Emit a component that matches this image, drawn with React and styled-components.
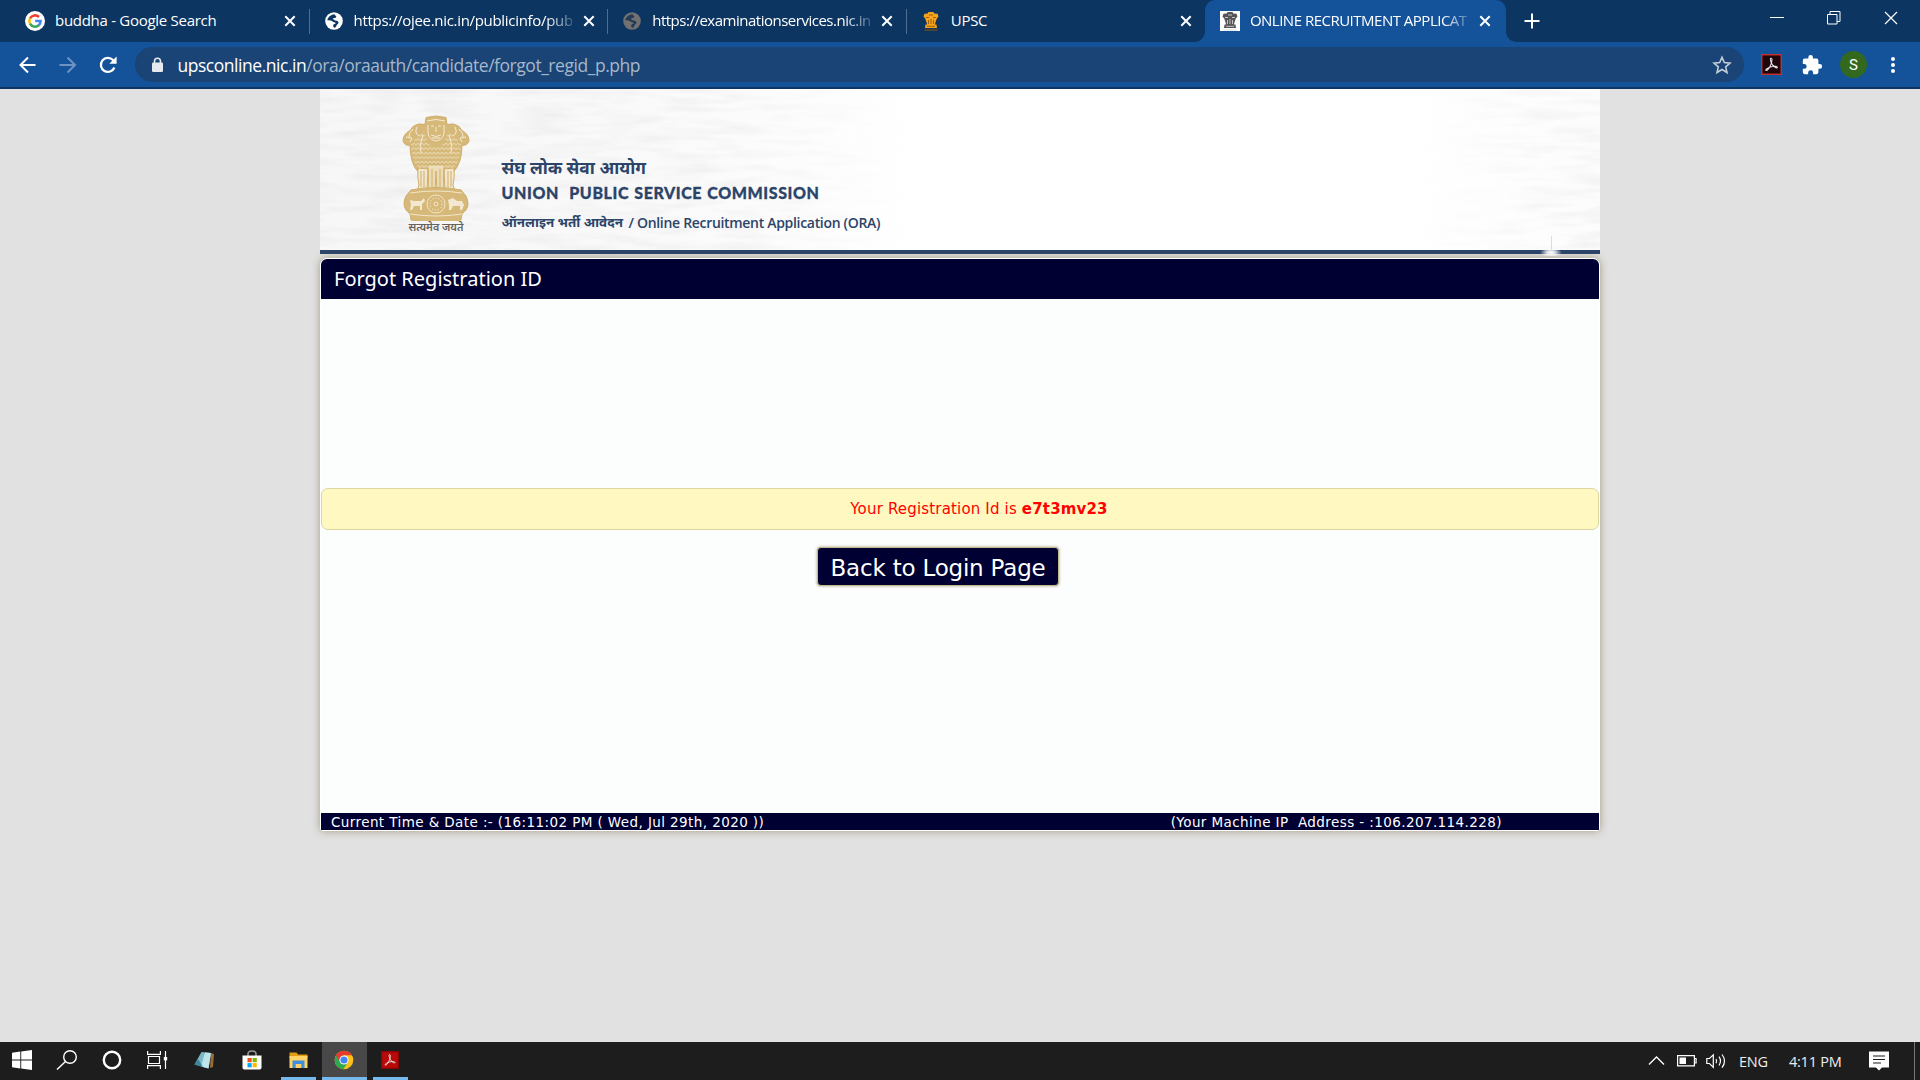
import React from "react";
import styled, { createGlobalStyle, css } from "styled-components";

const UI = `"Open Sans", "Noto Sans", sans-serif`;
const VERDANA = `Verdana, "DejaVu Sans", sans-serif`;
const NAVY = "#000033";

const Global = createGlobalStyle`
  * { box-sizing: border-box; }
  html, body { margin: 0; padding: 0; background: #e1e1e1; }
  body { font-family: ${UI}; overflow: hidden; }
  svg { display: block; flex: none; }
`;

const Screen = styled.div`
  display: flex;
  flex-direction: column;
  width: 1920px;
  height: 1080px;
  background: #e1e1e1;
`;

/* ---------- browser chrome ---------- */

const TabStrip = styled.div`
  display: flex;
  height: 42px;
  padding-left: 11px;
  background: #0c3561;
  color: #fff;
`;

const Tab = styled.div`
  position: relative;
  display: flex;
  align-items: center;
  width: 298.6px;
  height: 42px;
  padding: 0 13px 0 14px;
  ${(p) =>
    p.$divider &&
    css`
      &::after {
        content: "";
        position: absolute;
        right: 0;
        top: 9px;
        width: 1px;
        height: 25px;
        background: #4f6f91;
      }
    `}
  ${(p) =>
    p.$active &&
    css`
      width: 300.5px;
      padding-left: 14.5px;
      background: #145299;
      border-radius: 10px 10px 0 0;
      &::before,
      &::after {
        content: "";
        position: absolute;
        bottom: 0;
        width: 10px;
        height: 10px;
      }
      &::before {
        left: -10px;
        background: radial-gradient(circle at 0 0, transparent 9.5px, #145299 10px);
      }
      &::after {
        right: -10px;
        background: radial-gradient(circle at 100% 0, transparent 9.5px, #145299 10px);
      }
    `}
`;

const TabIcon = styled.div`
  display: flex;
  align-items: center;
  justify-content: center;
  width: 20px;
  height: 20px;
  margin-right: 10px;
  flex: none;
  background: ${(p) => p.$bg || "transparent"};
`;

const TabTitle = styled.div`
  width: 218px;
  margin-right: 11px;
  padding-bottom: 2px;
  overflow: hidden;
  white-space: nowrap;
  font-size: 15px;
  line-height: 22px;
  letter-spacing: ${(p) => p.$ls || "-0.28px"};
  ${(p) =>
    p.$fade &&
    css`
      mask-image: linear-gradient(90deg, #000 192px, transparent 226px);
    `}
`;

const NewTab = styled.div`
  display: flex;
  align-items: center;
  margin-left: 18.5px;
`;

const WindowControls = styled.div`
  display: flex;
  align-items: center;
  gap: 43px;
  margin-left: auto;
  padding: 0 22px 6px 0;
`;

const Toolbar = styled.div`
  display: flex;
  align-items: center;
  height: 47px;
  padding: 0 16px 0 18px;
  background: #145299;
  border-bottom: 2px solid #0c3561;
`;

const NavIcons = styled.div`
  display: flex;
  align-items: center;
  gap: 20px;
  width: 117px;
`;

const AddressBar = styled.div`
  display: flex;
  align-items: center;
  width: 1610px;
  height: 35px;
  padding: 0 12px 0 16px;
  border-radius: 18px;
  background: #194475;
`;

const Url = styled.div`
  flex: 1;
  margin-left: 13.5px;
  color: #a7b7ca;
  font-size: 17.5px;
  line-height: 24px;
  letter-spacing: -0.46px;
  white-space: nowrap;
`;

const Host = styled.span`
  color: #fff;
`;

const Extensions = styled.div`
  display: flex;
  align-items: center;
  gap: 19px;
  margin-left: 17px;
`;

const Avatar = styled.div`
  display: flex;
  align-items: center;
  justify-content: center;
  width: 27px;
  height: 27px;
  margin: 0 -2px;
  border-radius: 50%;
  background: #33691e;
  color: #fff;
  font: 15px Roboto, sans-serif;
`;

/* ---------- page ---------- */

const Page = styled.main`
  display: flex;
  flex-direction: column;
  align-items: center;
  flex: 1;
  min-height: 0;
`;

const Banner = styled.header`
  position: relative;
  display: flex;
  width: 1280px;
  height: 165px;
  background: linear-gradient(90deg, #f7f7f7 0, #f9f9f9 300px, #fff 600px, #fff 1080px, #fcfcfc 1280px);
  border-bottom: 4px solid #2b4468;
  color: #2b4468;
`;

const Texture = styled.svg`
  position: absolute;
  inset: 0;
`;

const Flare = styled.svg`
  position: absolute;
  left: 1218px;
  top: 145px;
`;

const EmblemBlock = styled.div`
  position: relative;
  display: flex;
  flex-direction: column;
  align-items: center;
  width: 72px;
  margin: 26px 0 0 80px;
`;

const Motto = styled.div`
  color: #66615b;
  font: 600 10.8px/12px "Noto Sans", "Noto Sans Devanagari", sans-serif;
  white-space: nowrap;
`;

const BannerText = styled.div`
  position: relative;
  display: flex;
  flex-direction: column;
  margin: 69px 0 0 29.5px;
  white-space: nowrap;
`;

const HindiName = styled.div`
  margin-top: -1px;
  font: 700 17.3px/26px "Noto Sans Devanagari", "Noto Sans", sans-serif;
`;

const EnglishName = styled.div`
  margin-top: -2px;
  font: 900 16px/24px Lato, sans-serif;
  letter-spacing: 0.58px;
  word-spacing: 0.8px;
  -webkit-text-stroke: 0.3px #2b4468;
`;

const PortalName = styled.div`
  display: flex;
  margin-top: 6px;
  font: 600 14px/24px "Open Sans", sans-serif;
  letter-spacing: -0.31px;
`;

const PortalHindi = styled.span`
  width: 127px;
  font: 700 13.4px/26px "Noto Sans Devanagari", "Noto Sans", sans-serif;
  letter-spacing: 0;
`;

const Panel = styled.section`
  display: flex;
  flex-direction: column;
  width: 1280px;
  height: 573px;
  margin-top: 4px;
  border: 1px solid #fff;
  border-radius: 7px 7px 3px 3px;
  background: #fcfdfd;
  box-shadow: 0 0 9px #a39c80;
`;

const PanelTitle = styled.h1`
  height: 40px;
  margin: 0;
  padding-left: 13px;
  border-radius: 6px 6px 0 0;
  background: ${NAVY};
  color: #fff;
  font: 400 20px/40px Tahoma, "Noto Sans", sans-serif;
`;

const Message = styled.div`
  height: 42px;
  margin-top: 189px;
  padding-left: 38px;
  border: 1px solid #dad7a2;
  border-radius: 7px;
  background: #fff9c1;
  color: #f00;
  font: 15px/40px ${VERDANA};
  letter-spacing: 0.17px;
  text-align: center;
`;

const BackButton = styled.button`
  align-self: flex-start;
  width: 242px;
  height: 39px;
  margin: 17px 0 0 496px;
  padding: 3px 0 0;
  border: 1px solid #c5b98a;
  border-radius: 4px;
  background: ${NAVY};
  box-shadow: 0 0 3px #a39c80;
  color: #fff;
  font: 23px/34px ${VERDANA};
  letter-spacing: -0.2px;
  white-space: nowrap;
`;

const StatusBar = styled.footer`
  display: flex;
  justify-content: space-between;
  height: 17px;
  margin-top: auto;
  padding: 0 97px 0 10px;
  background: ${NAVY};
  color: #fff;
  font: 13.5px/18px ${VERDANA};
  letter-spacing: ${(p) => p.$ls || "0.41px"};
  white-space: pre;
`;

/* ---------- taskbar ---------- */

const Taskbar = styled.div`
  display: flex;
  align-items: stretch;
  height: 38px;
  background: #1d1d1d;
  color: #fff;
`;

const TaskItem = styled.div`
  display: flex;
  align-items: center;
  justify-content: center;
  width: ${(p) => p.$w || 46}px;
  background: ${(p) => (p.$active ? "#484848" : "transparent")};
  border-bottom: 3px solid ${(p) => (p.$open ? "#76b9ed" : "transparent")};
  margin: 0 ${(p) => p.$mr || 0}px 0 ${(p) => p.$ml || 0}px;
  padding-right: ${(p) => (p.$open ? 1 : 0)}px;
`;

const Tray = styled.div`
  display: flex;
  align-items: center;
  margin-left: auto;
  width: 266px;
`;

const TrayText = styled.div`
  width: ${(p) => p.$w}px;
  font-size: 14.5px;
  letter-spacing: -0.25px;
  white-space: nowrap;
  color: #eee;
`;

const Spacer = styled.div`
  width: ${(p) => p.$w}px;
`;

const DesktopEdge = styled.div`
  width: 6px;
  height: 38px;
  border-left: 1px solid #777;
`;

/* ---------- drawings ---------- */

const Close = () => (
  <svg width="12" height="12" viewBox="0 0 12 12" stroke="#fff" strokeWidth="2">
    <path d="M1.300 1.300l9.400 9.400M10.700 1.300L1.300 10.700" />
  </svg>
);

const GoogleIcon = () => (
  <svg width="20" height="20" viewBox="0 0 20 20" fill="none" strokeWidth="2.500">
    <circle cx="10" cy="10" r="10" fill="#fff" />
    <path d="M5 7.400A5.700 5.700 0 0 1 14 6" stroke="#ea4335" />
    <path d="M5 12.700a5.700 5.700 0 0 1 0-5.300" stroke="#fbbc05" />
    <path d="M5 12.700a5.700 5.700 0 0 0 8.800 1.600" stroke="#34a853" />
    <path d="M10.200 10h5.400a5.600 5.600 0 0 1-1.800 4.300" stroke="#4285f4" />
  </svg>
);

const Globe = ({ color, land }) => (
  <svg width="18" height="18" viewBox="0 0 18 18">
    <circle cx="9" cy="9" r="8.800" fill={color} />
    <path
      d="M9.800 2.200C6 2.500 3 4.800 2.300 8.200c2.200.2 4.200 0 5.200 1.200c.9 1.100 2.700.3 3 1.500c.3 1.100-2.200.9-2.300 2.300c0 1.100.2 1.900 1 2.600c1.600-.3 2-1.300 2.300-2.300c.4-1.300 2-1.300 2-2.900c0-1.500-1.200-1.900-2.400-1.900c-1.600 0-1.700-1.500-3.400-1.800c.4-1.400 2.200-.4 3.100-1.300c.8-.8.6-1.700-.4-2.100c-.6-.3-.7-.7-.6-1.300z"
      fill={land}
    />
  </svg>
);

const MiniEmblem = ({ main, dark }) => (
  <svg width="18" height="20" viewBox="0 0 18 20">
    <path d="M6.500 1h5l.7 1.500 3.300.3 1 2.700-1.700 2-1.200 3.500-1 3.500H5.400l-1-3.500-1.200-3.500-1.700-2 1-2.700 3.300-.3z" fill={main} />
    <path d="M3.500 13.500h11l.5 3.500H3z" fill={main} />
    <path d="M7 4h4M4 6.500h3M11 6.500h3M6.500 9v4M9 8v5M11.500 9v4M5 15.300h8" stroke={dark} strokeWidth=".8" />
    <path d="M2.500 19h13" stroke={dark} strokeWidth="1.100" />
  </svg>
);

const AcrobatGlyph = ({ size, bg, border }) => (
  <svg width={size} height={size} viewBox="0 0 20 20" fill="none">
    <rect x=".7" y=".7" width="18.600" height="18.600" fill={bg} stroke={border} strokeWidth="1.400" />
    <path
      d="M9.300 4c1.500-.3 1.400 2.200.5 5c-1 3-3.300 6.600-4.800 6.700c-1.700-.3 1-2.700 4.800-3.600c3.400-.8 6-.3 5.800.8c-.5 1.300-3.500-.7-5-3c-1.200-2-2.300-5.500-1.300-5.900z"
      stroke="#e8e8e8"
      strokeWidth="1"
    />
  </svg>
);

const EMBLEM = "#d6b878";

const Emblem = () => (
  <svg width="68" height="106" viewBox="0 0 68 106">
    <defs>
      <pattern id="mane" width="4" height="4.500" patternUnits="userSpaceOnUse">
        <path d="M0 1l2 2.200L4 1" fill="none" stroke="#f1e5c8" strokeWidth=".9" />
      </pattern>
    </defs>
    <g stroke="#cfae6a" strokeWidth="1">
      <path
        d="M24 2.500q10-3 20 0l1 7q7-2 12 2l3 4q7 4 7 10q-1 5-7 5q0 8-2 15q-3 8-7 12H17q-5-4-7-12q-2-7-2-15q-6 0-7-5q0-6 7-10l3-4q5-4 12-2z"
        fill={EMBLEM}
      />
      <path d="M16 53q-1 9 1 17l-2 6h10l1-22zM52 53q1 9-1 17l2 6H43l-1-22z" fill="#f2e7cd" />
      <path d="M26 50q1 12 0 26h7l1-20 1 20h7q-1-14 0-26z" fill="#ecdcb6" />
      <path d="M19 56v16M22 56v17M49 56v16M46 56v17M30 54v18M38 54v18" fill="none" />
    </g>
    <path d="M9 30q4-9 13-14l4 12q8 7 16 0l4-12q9 5 13 14q0 17-9 25H18Q9 47 9 30z" fill="url(#mane)" />
    <g fill="none" stroke="#f5ebd3" strokeWidth="1">
      <path d="M25 6q9-3 18 0M26 10v8q1 7 8 8q7-1 8-8v-8M29 11h3M36 11h3M34 12v5M29 20q5 3 10 0M30 23h8" />
      <path d="M11 14q-5 4-4 9M4 22l6 1-2 4M15 12q-3 6 2 9M57 14q5 4 4 9M64 22l-6 1 2 4M53 12q3 6-2 9" />
      <path d="M21 20q-4 9-2 18M47 20q4 9 2 18" />
    </g>
    <path d="M9 75q25-5 50 0l5 6q4 8 0 14l-4 4-1 6q-25 4-50 0l-1-6-4-4Q0 89 4 81z" fill={EMBLEM} stroke="#cfae6a" />
    <g fill="none" stroke="#f5ebd3" strokeWidth=".9">
      <path d="M8 78q26-4 52 0M8 99q26 4 52 0" />
      <circle cx="34" cy="89" r="9" />
      <circle cx="34" cy="89" r="6" strokeDasharray="1.500 1.500" />
      <circle cx="34" cy="89" r="2" />
    </g>
    <path d="M8 85l4 1h7l3-3 1 3-3 3v6h-2v-4h-6l-2 4H8l1-5zM46 85l5-2 4 3h5l2 4-2 5h-2v-4h-7l-2 4h-2v-5z" fill="#f3e8cf" />
  </svg>
);

const PaperTexture = () => (
  <Texture width="1280" height="161">
    <defs>
      <filter id="paper" x="0" y="0" width="100%" height="100%">
        <feTurbulence type="fractalNoise" baseFrequency="0.02 0.13" numOctaves="2" seed="6" />
        <feColorMatrix values="0 0 0 0 .8  0 0 0 0 .8  0 0 0 0 .81  1.300 0 0 0 -.52" />
      </filter>
      <linearGradient id="fade">
        <stop offset="0" stopColor="#fff" />
        <stop offset=".3" stopColor="#fff" stopOpacity=".8" />
        <stop offset=".46" stopColor="#fff" stopOpacity="0" />
        <stop offset=".86" stopColor="#fff" stopOpacity="0" />
        <stop offset="1" stopColor="#fff" stopOpacity=".8" />
      </linearGradient>
      <mask id="sides">
        <rect width="1280" height="161" fill="url(#fade)" />
      </mask>
    </defs>
    <g mask="url(#sides)">
      <rect width="1280" height="161" filter="url(#paper)" />
    </g>
  </Texture>
);

const LensFlare = () => (
  <Flare width="26" height="22" viewBox="0 0 26 22">
    <defs>
      <radialGradient id="glow">
        <stop offset="0" stopColor="#fff" />
        <stop offset=".4" stopColor="#fff" stopOpacity=".8" />
        <stop offset="1" stopColor="#fff" stopOpacity="0" />
      </radialGradient>
    </defs>
    <ellipse cx="13" cy="18.500" rx="11" ry="5" fill="url(#glow)" />
    <path d="M13.500 2v14" stroke="#dcdcdc" />
  </Flare>
);

const tabs = [
  { title: "buddha - Google Search", icon: <GoogleIcon />, divider: true },
  { title: "https://ojee.nic.in/publicinfo/pub", icon: <Globe color="#fff" land="#0c3561" />, divider: true, fade: true, ls: "-0.31px" },
  { title: "https://examinationservices.nic.in", icon: <Globe color="#717171" land="#243b55" />, divider: true, fade: true, ls: "-0.49px" },
  { title: "UPSC", icon: <MiniEmblem main="#f5a31a" dark="#8a4f08" /> },
  {
    title: "ONLINE RECRUITMENT APPLICAT",
    icon: <MiniEmblem main="#555" dark="#ddd" />,
    bg: "#fff",
    active: true,
    fade: true,
    ls: "-0.5px",
  },
];

export default function App() {
  return (
    <Screen>
      <Global />
      <TabStrip>
        {tabs.map((t) => (
          <Tab key={t.title} $active={t.active} $divider={t.divider}>
            <TabIcon $bg={t.bg}>{t.icon}</TabIcon>
            <TabTitle $fade={t.fade} $ls={t.ls}>{t.title}</TabTitle>
            <Close />
          </Tab>
        ))}
        <NewTab>
          <svg width="16" height="16" viewBox="0 0 16 16" stroke="#fff" strokeWidth="2">
            <path d="M8 .5v15M.5 8h15" />
          </svg>
        </NewTab>
        <WindowControls>
          <svg width="14" height="14" stroke="#fff"><path d="M0 6.500h14" /></svg>
          <svg width="14" height="14" fill="none" stroke="#fff"><path d="M.5 3.500h9.500v9.500H.5zM3 3.500V.5h10v10h-3" /></svg>
          <svg width="14" height="14" fill="none" stroke="#fff" strokeWidth="1.200"><path d="M1 1l12 12M13 1L1 13" /></svg>
        </WindowControls>
      </TabStrip>

      <Toolbar>
        <NavIcons>
          <svg width="20" height="20" viewBox="0 0 20 20" fill="none" stroke="#fff" strokeWidth="2"><path d="M17.500 10H3M10 2.500L2.500 10l7.500 7.500" /></svg>
          <svg width="20" height="20" viewBox="0 0 20 20" fill="none" stroke="#6d93c0" strokeWidth="2"><path d="M1.500 10H16M9.500 2.500L17 10l-7.500 7.500" /></svg>
          <svg width="20" height="20" viewBox="0 0 20 20" fill="none" stroke="#fff" strokeWidth="2.200"><path d="M16.400 12.500A7 7 0 1 1 15 5.100L17 7" /><path d="M18.600 1.500v7.300h-7.300z" fill="#fff" stroke="none" /></svg>
        </NavIcons>
        <AddressBar>
          <svg width="13" height="16" viewBox="0 0 13 16"><path d="M3.500 6V4.200a3 3 0 0 1 6 0V6" fill="none" stroke="#e6e9ee" strokeWidth="1.600" /><rect x="1" y="5.500" width="11" height="9.500" rx="1.200" fill="#e6e9ee" /></svg>
          <Url><Host>upsconline.nic.in</Host>/ora/oraauth/candidate/forgot_regid_p.php</Url>
          <svg width="20" height="20" viewBox="0 0 20 20" fill="none" stroke="#c3ccd8" strokeWidth="1.600"><path d="M10 2.300l2.300 5.300 5.700.5-4.300 3.800 1.300 5.600-5-3-5 3 1.300-5.600L2 8.100l5.700-.5z" /></svg>
        </AddressBar>
        <Extensions>
          <AcrobatGlyph size={21} bg="#20060c" border="#c4302b" />
          <svg width="22" height="22" viewBox="0 0 24 24" fill="#fff"><path d="M20.500 11H19V7a2 2 0 0 0-2-2h-4V3.500a2.500 2.500 0 0 0-5 0V5H4a2 2 0 0 0-2 2v3.800h1.500a2.700 2.700 0 0 1 0 5.400H2V20a2 2 0 0 0 2 2h3.800v-1.500a2.700 2.700 0 0 1 5.400 0V22H17a2 2 0 0 0 2-2v-4h1.500a2.500 2.500 0 0 0 0-5z" /></svg>
          <Avatar>S</Avatar>
          <svg width="20" height="20" fill="#fff"><circle cx="9" cy="4" r="2" /><circle cx="9" cy="10" r="2" /><circle cx="9" cy="16" r="2" /></svg>
        </Extensions>
      </Toolbar>

      <Page>
        <Banner>
          <PaperTexture />
          <LensFlare />
          <EmblemBlock>
            <Emblem />
            <Motto>सत्यमेव जयते</Motto>
          </EmblemBlock>
          <BannerText>
            <HindiName>संघ लोक सेवा आयोग</HindiName>
            <EnglishName>UNION&nbsp; PUBLIC SERVICE COMMISSION</EnglishName>
            <PortalName>
              <PortalHindi>ऑनलाइन भर्ती आवेदन</PortalHindi>
              <span>/ Online Recruitment Application (ORA)</span>
            </PortalName>
          </BannerText>
        </Banner>

        <Panel>
          <PanelTitle>Forgot Registration ID</PanelTitle>
          <Message>Your Registration Id is <b>e7t3mv23</b></Message>
          <BackButton>Back to Login Page</BackButton>
          <StatusBar>
            <span>Current Time &amp; Date :- (16:11:02 PM ( Wed, Jul 29th, 2020 ))</span>
            <span>{"(Your Machine IP  Address - :106.207.114.228)"}</span>
          </StatusBar>
        </Panel>
      </Page>

      <Taskbar>
        <TaskItem $w={44}>
          <svg width="20" height="20" viewBox="0 0 20 20" fill="#fff"><path d="M0 2.800l8.300-1.200v7.900H0zM9.200 1.500L20 0v9.500H9.200zM0 10.400h8.300v8L0 17.300zM9.200 10.400H20V20L9.200 18.500z" /></svg>
        </TaskItem>
        <TaskItem>
          <svg width="22" height="20" viewBox="0 0 22 20" fill="none" stroke="#fff" strokeWidth="1.400"><circle cx="14" cy="7" r="6.300" /><path d="M9.500 11.500L1 19.500" /></svg>
        </TaskItem>
        <TaskItem $w={44}>
          <svg width="20" height="20"><circle cx="10" cy="10" r="8.200" fill="none" stroke="#fff" strokeWidth="2.400" /></svg>
        </TaskItem>
        <TaskItem>
          <svg width="21" height="20" viewBox="0 0 21 20" fill="none" stroke="#fff" strokeWidth="1.200"><path d="M.6 1v3.400h12.800V1M.6 19v-3.400h12.800V19M1.500 6.500h11v7h-11zM18.500 1v18" /><path d="M16.800 7h3.400v3.400h-3.400z" fill="#fff" stroke="none" /></svg>
        </TaskItem>
        <TaskItem $w={49}>
          <svg width="21" height="20" viewBox="0 0 21 20"><path d="M17 3l3 1-1 13-3 1z" fill="#9a6c2e" /><path d="M7.500 2L17 3l-2.500 15.500L.5 14.500z" fill="#79b8c8" /><path d="M11 2.400L17 3l-2.500 15.500L7 16.400z" fill="#bfe3ea" /><path d="M.5 14.500l3.500-5.500 5 8z" fill="#3d8499" /></svg>
        </TaskItem>
        <TaskItem $w={45}>
          <svg width="20" height="20" viewBox="0 0 20 20"><path d="M6 6V4q0-3 4-3t4 3v2" fill="none" stroke="#999" strokeWidth="1.500" /><path d="M.5 5.500h19v12q0 2-1.800 2H2.300q-1.800 0-1.800-2z" fill="#fff" /><path d="M5.500 8h4.200v4.200H5.500z" fill="#f25022" /><path d="M10.600 8h4.200v4.200h-4.200z" fill="#7fba00" /><path d="M5.500 13.100h4.200v4.200H5.500z" fill="#00a4ef" /><path d="M10.600 13.100h4.200v4.200h-4.200z" fill="#ffb900" /></svg>
        </TaskItem>
        <TaskItem $w={35} $ml={7} $mr={6} $open>
          <svg width="19" height="18" viewBox="0 0 19 18"><path d="M.5 1.500h7l1.500 2h9.500V7H.5z" fill="#e09b12" /><path d="M.5 5h18v12H.5z" fill="#fed264" /><path d="M3.500 17v-7.500h12V17h-3.200v-4H6.700v4z" fill="#3e8edb" /></svg>
        </TaskItem>
        <TaskItem $w={45} $mr={6} $active $open>
          <svg width="20" height="20" viewBox="0 0 20 20"><circle cx="10" cy="10" r="9.300" fill="#fbc116" /><path d="M10 10L1.950 5.350A9.300 9.300 0 0 0 9.200 19.300L14 12.300z" fill="#2da94f" /><path d="M1.950 5.350A9.300 9.300 0 0 1 18.050 5.350H10L6 12.300z" fill="#e33b2e" /><circle cx="10" cy="10" r="4.600" fill="#fff" /><circle cx="10" cy="10" r="3.600" fill="#4285f4" /></svg>
        </TaskItem>
        <TaskItem $w={35} $open>
          <AcrobatGlyph size={18} bg="#b90a0a" border="#8a0505" />
        </TaskItem>
        <Tray>
          <svg width="18" height="12" fill="none" stroke="#fff" strokeWidth="1.300"><path d="M1 9.500l7.500-7.500L16 9.500" /></svg>
          <Spacer $w={11} />
          <svg width="20" height="12" fill="none" stroke="#fff" strokeWidth="1.200"><path d="M.6.6h16.800v10.300H.6zM17.500 3.500h1.600v4.500h-1.600" /><path d="M2.500 2.500h6.500v6.500H2.500z" fill="#fff" stroke="none" /></svg>
          <Spacer $w={9} />
          <svg width="22" height="18" viewBox="0 0 22 18" fill="none" stroke="#fff" strokeWidth="1.200"><path d="M.8 6.500h2.700l3.800-3.700v12.500L3.500 11.500H.8zM10 7q1.300 2 0 4.200M13 4.700q3 4.300 0 8.800M16 2.500q5 6.500 0 13.200" /></svg>
          <Spacer $w={11} />
          <TrayText $w={50}>ENG</TrayText>
          <TrayText $w={80}>4:11 PM</TrayText>
          <svg width="20" height="20" viewBox="0 0 20 20"><path d="M0 .5h20v16h-7l-3 3-3-3H0z" fill="#fff" /><path d="M4 5h12M4 8.500h12M4 12h8" stroke="#1d1d1d" strokeWidth="1.200" /></svg>
        </Tray>
        <DesktopEdge />
      </Taskbar>
    </Screen>
  );
}
